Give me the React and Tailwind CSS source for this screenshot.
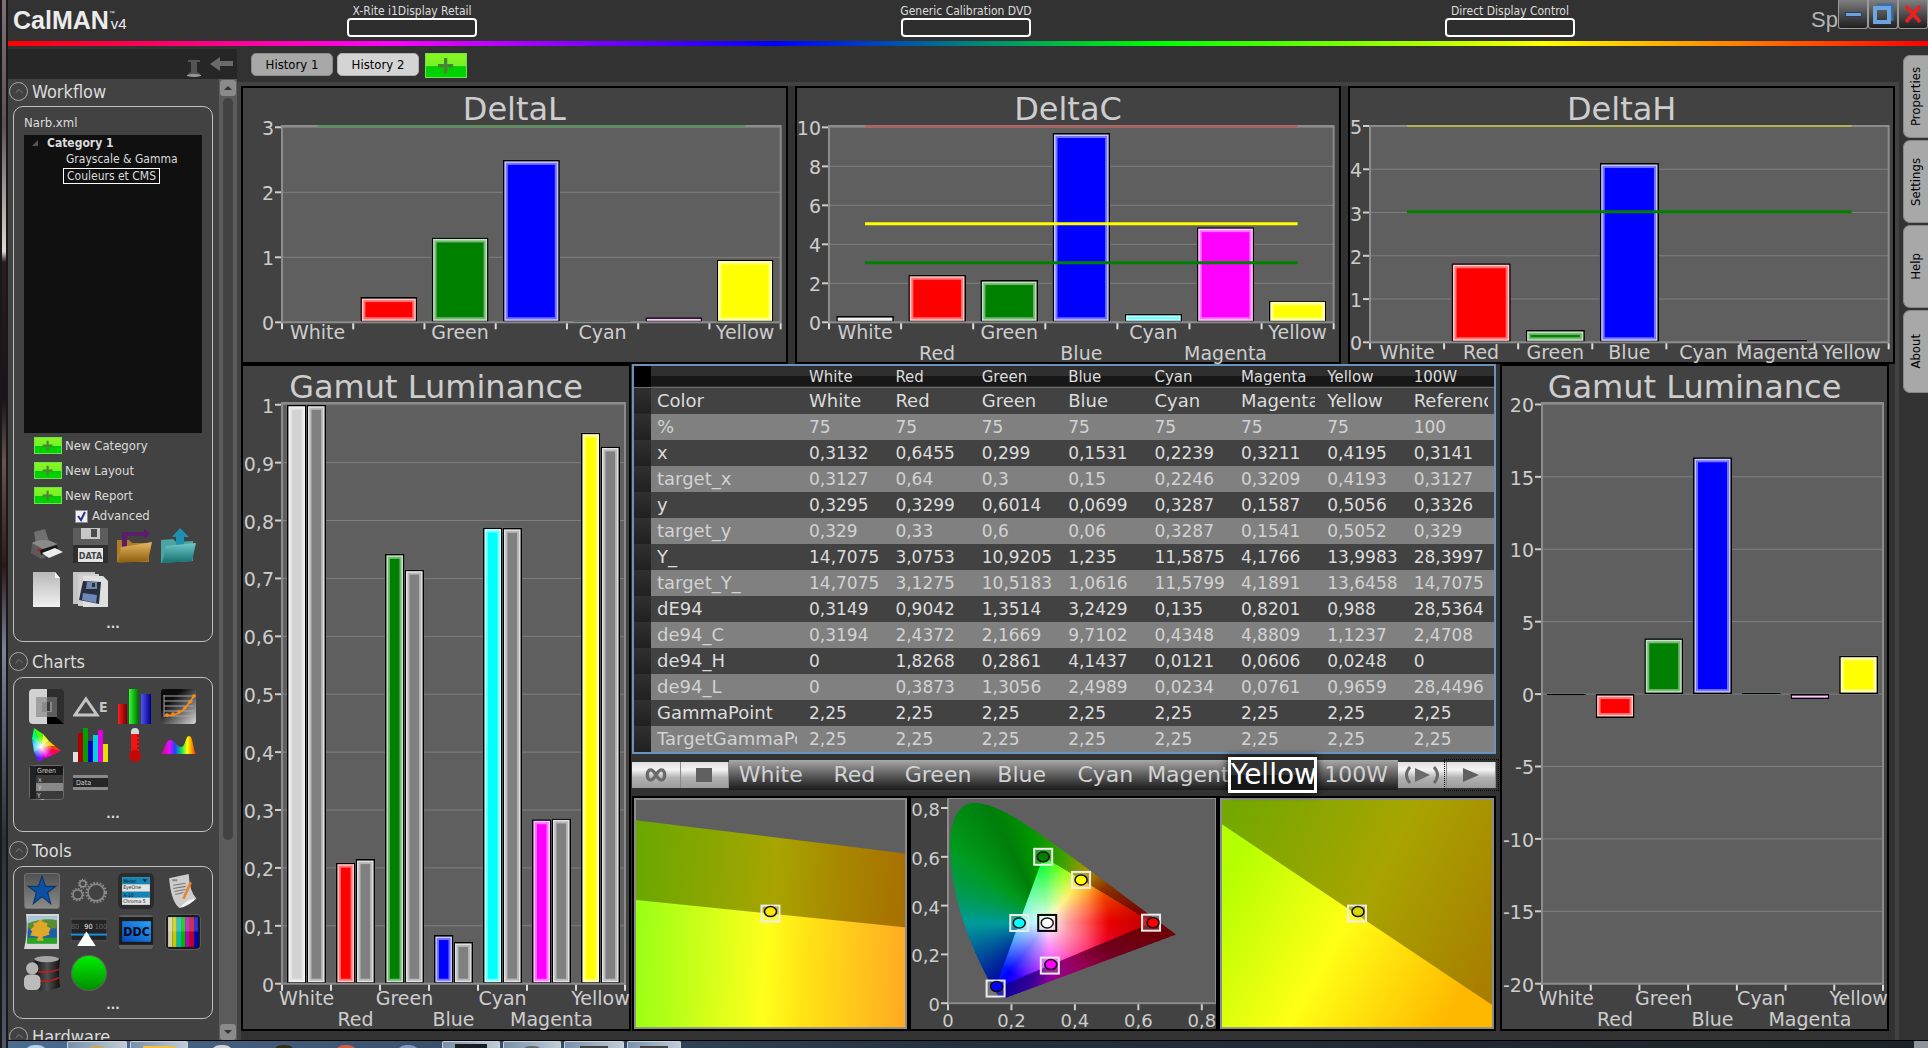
import { ChevronUp } from "lucide-react";

const COLORS = ["White", "Red", "Green", "Blue", "Cyan", "Magenta", "Yellow"];
const FILLS = ["#d3d3d3", "#ff0000", "#008000", "#0000ff", "#00ffff", "#ff00ff", "#ffff00"];

const COLUMNS = [...COLORS, "100W"];

const ROWS = [
  ["Color", "White", "Red", "Green", "Blue", "Cyan", "Magenta", "Yellow", "Reference"],
  ["%", "75", "75", "75", "75", "75", "75", "75", "100"],
  ["x", "0,3132", "0,6455", "0,299", "0,1531", "0,2239", "0,3211", "0,4195", "0,3141"],
  ["target_x", "0,3127", "0,64", "0,3", "0,15", "0,2246", "0,3209", "0,4193", "0,3127"],
  ["y", "0,3295", "0,3299", "0,6014", "0,0699", "0,3287", "0,1587", "0,5056", "0,3326"],
  ["target_y", "0,329", "0,33", "0,6", "0,06", "0,3287", "0,1541", "0,5052", "0,329"],
  ["Y_", "14,7075", "3,0753", "10,9205", "1,235", "11,5875", "4,1766", "13,9983", "28,3997"],
  ["target_Y_", "14,7075", "3,1275", "10,5183", "1,0616", "11,5799", "4,1891", "13,6458", "14,7075"],
  ["dE94", "0,3149", "0,9042", "1,3514", "3,2429", "0,135", "0,8201", "0,988", "28,5364"],
  ["de94_C", "0,3194", "2,4372", "2,1669", "9,7102", "0,4348", "4,8809", "1,1237", "2,4708"],
  ["de94_H", "0", "1,8268", "0,2861", "4,1437", "0,0121", "0,0606", "0,0248", "0"],
  ["de94_L", "0", "0,3873", "1,3056", "2,4989", "0,0234", "0,0761", "0,9659", "28,4496"],
  ["GammaPoint", "2,25", "2,25", "2,25", "2,25", "2,25", "2,25", "2,25", "2,25"],
  ["TargetGammaPoint", "2,25", "2,25", "2,25", "2,25", "2,25", "2,25", "2,25", "2,25"],
];

const pct = (n) => `${n}%`;

/* ---------- bar charts ---------- */

function Bar({ x, y, width, height, fill }) {
  return (
    <svg x={pct(x)} y={pct(y)} width={pct(width)} height={pct(height)}>
      <rect width="100%" height="100%" fill={fill} />
      <rect width="100%" height="100%" fill="none" stroke="#fff" strokeOpacity="0.45" strokeWidth="10" />
      <rect width="100%" height="100%" fill="none" stroke="#fff" strokeOpacity="0.6" strokeWidth="6" />
      <rect width="100%" height="100%" fill="none" stroke="#000" strokeWidth="3" />
    </svg>
  );
}

// labels: "single" = one row, "stagger" = odd ones on a second row, "even" = odd ones hidden
function BarChart({ title, series, min, max, ticks, lines = [], labels, labelRows = [17, 38], titleClass, bodyClass }) {
  const range = max - min;
  const toY = (v) => ((max - v) / range) * 100;
  const slot = 100 / COLORS.length;
  const barWidth = (slot * 0.8) / series.length;

  return (
    <section className="flex min-h-0 min-w-0 flex-1 flex-col border-2 border-black bg-[#424242] font-['DejaVu_Sans',sans-serif] text-[#cdcdcd]">
      <h2 className={`shrink-0 text-center text-[32px] ${titleClass}`}>{title}</h2>
      <div className={`min-h-0 flex-1 ${bodyClass}`}>
        <svg className="block h-full w-full overflow-visible text-[19px]" role="img">
          <rect width="100%" height="100%" fill="#5f5f5f" />
          {ticks.map((t) => (
            <g key={t}>
              <line x1="0" x2="100%" y1={pct(toY(t))} y2={pct(toY(t))} stroke="#808080" strokeWidth="1" />
              <line x1="-7" x2="0" y1={pct(toY(t))} y2={pct(toY(t))} stroke="#cdcdcd" strokeWidth="2" />
              <text x="-8" y={pct(toY(t))} dy="8" textAnchor="end" fill="currentColor">
                {String(t).replace(".", ",")}
              </text>
            </g>
          ))}
          {series.map((s, si) =>
            s.values.map((v, i) => {
              const top = toY(Math.min(Math.max(v, 0), max));
              const bottom = toY(Math.min(v, 0));
              if (top === bottom) return null;
              return (
                <Bar
                  key={`${si}-${i}`}
                  x={i * slot + slot * 0.1 + si * barWidth}
                  y={top}
                  width={barWidth}
                  height={bottom - top}
                  fill={s.fill || FILLS[i]}
                />
              );
            })
          )}
          <rect width="100%" height="100%" fill="none" stroke="#8c8c8c" strokeWidth="2" />
          {lines.map((l) => (
            <line
              key={l.value}
              x1={pct(slot / 2)}
              x2={pct(100 - slot / 2)}
              y1={pct(toY(l.value))}
              y2={pct(toY(l.value))}
              stroke={l.color}
              strokeWidth={l.width}
            />
          ))}
          <svg y="100%" className="overflow-visible">
            {[...COLORS, ""].map((c, i) => (
              <line key={i} x1={pct(i * slot)} x2={pct(i * slot)} y1="1" y2="7" stroke="#dcdcdc" strokeWidth="2" />
            ))}
            {COLORS.map((c, i) => {
              const odd = i % 2 === 1;
              if (odd && labels === "even") return null;
              return (
                <text
                  key={c}
                  x={pct(i * slot + slot / 2)}
                  y={odd && labels === "stagger" ? labelRows[1] : labelRows[0]}
                  textAnchor="middle"
                  fill="currentColor"
                >
                  {c}
                </text>
              );
            })}
          </svg>
        </svg>
      </div>
    </section>
  );
}

/* ---------- chromaticity plots ---------- */

const LOCUS =
  "M227 137 L59 200 Q54 203 49 197 C32 170 3 110 2 50 C2 20 12 5 26 5 C50 5 80 28 119 56 Z";

const DARK_STOPS = [
  [0, [110, 0, 0]],
  [30, [140, 50, 0]],
  [52, [170, 150, 0]],
  [75, [60, 160, 0]],
  [100, [0, 150, 0]],
  [115, [0, 125, 10]],
  [140, [0, 155, 30]],
  [160, [0, 155, 80]],
  [180, [0, 155, 155]],
  [205, [0, 80, 155]],
  [232, [0, 0, 160]],
  [255, [60, 0, 150]],
  [273, [150, 0, 150]],
  [310, [150, 0, 80]],
  [335, [110, 0, 30]],
  [360, [110, 0, 0]],
];

const BRIGHT_STOPS = [
  [0, [255, 0, 0]],
  [25, [255, 90, 0]],
  [52, [255, 230, 0]],
  [70, [140, 255, 0]],
  [93, [0, 255, 40]],
  [180, [0, 240, 255]],
  [232, [0, 0, 255]],
  [255, [130, 0, 255]],
  [273, [255, 0, 255]],
  [310, [255, 0, 110]],
  [360, [255, 0, 0]],
];

function colorAt(stops, angle) {
  const i = Math.max(1, stops.findIndex(([a]) => a >= angle));
  const [a0, c0] = stops[i - 1];
  const [a1, c1] = stops[i];
  const k = (angle - a0) / (a1 - a0);
  return `rgb(${c0.map((c, n) => Math.round(c + (c1[n] - c) * k)).join(",")})`;
}

// Colour wheel around the white point, made of 2 degree wedges
function Wheel({ stops, clip }) {
  const cx = 99;
  const cy = 125;
  const wedges = [];
  for (let a = 0; a < 360; a += 2) {
    const r0 = (a * Math.PI) / 180;
    const r1 = ((a + 3) * Math.PI) / 180;
    wedges.push(
      <polygon
        key={a}
        points={`${cx},${cy} ${cx + 260 * Math.cos(r0)},${cy - 260 * Math.sin(r0)} ${cx + 260 * Math.cos(r1)},${cy - 260 * Math.sin(r1)}`}
        fill={colorAt(stops, a)}
      />
    );
  }
  return <g clipPath={`url(#${clip})`}>{wedges}</g>;
}

function Marker({ x, y, fill, box = "#ececec", dot = [0, 0] }) {
  return (
    <svg x={pct(x)} y={pct(y)} className="overflow-visible">
      <rect x="-9" y="-8" width="18" height="16" fill="#fff" fillOpacity="0.15" stroke={box} strokeWidth="2" />
      <ellipse cx={dot[0]} cy={dot[1]} rx="6" ry="5" fill={fill} stroke="#111" strokeWidth="1.5" />
    </svg>
  );
}

const POINTS = [
  { t: [0.3, 0.6], fill: "#008000" },
  { t: [0.4193, 0.5052], fill: "#ffff00" },
  { t: [0.64, 0.33], fill: "#ff0000", dot: [2, 0] },
  { t: [0.2246, 0.3287], fill: "#00ffff" },
  { t: [0.3127, 0.329], fill: "#ffffff", box: "#000000" },
  { t: [0.3209, 0.1541], fill: "#ff00ff", dot: [1, -1] },
  { t: [0.15, 0.06], fill: "#0000ff", dot: [1, -2] },
];

function CieChart() {
  const xMax = 0.8447;
  const yMax = 0.841;
  const toX = (v) => (v / xMax) * 100;
  const toY = (v) => 100 - (v / yMax) * 100;
  const steps = [0, 0.2, 0.4, 0.6, 0.8];

  return (
    <section className="min-w-0 flex-[268] overflow-hidden border-2 border-black bg-[#424242] pb-[26px] pl-[37px] font-['DejaVu_Sans',sans-serif]">
      <svg className="block h-full w-full overflow-visible text-[18px] text-[#cdcdcd]" role="img">
        <rect width="100%" height="100%" fill="#5f5f5f" />
        <svg width="100%" height="100%" viewBox="0 0 267 206" preserveAspectRatio="none">
          <defs>
            <clipPath id="locus">
              <path d={LOCUS} />
            </clipPath>
            <clipPath id="gamut">
              <polygon points="203,125 95,59 47,191" />
            </clipPath>
            <radialGradient id="whitePoint" gradientUnits="userSpaceOnUse" cx="99" cy="125" r="62">
              <stop offset="0" stopColor="#fff" />
              <stop offset="0.35" stopColor="#fff" stopOpacity="0.6" />
              <stop offset="1" stopColor="#fff" stopOpacity="0" />
            </radialGradient>
            <linearGradient id="redEdge" gradientUnits="userSpaceOnUse" x1="140" y1="0" x2="203" y2="0">
              <stop offset="0" stopColor="#a00000" stopOpacity="0" />
              <stop offset="1" stopColor="#a00000" stopOpacity="0.7" />
            </linearGradient>
          </defs>
          <Wheel stops={DARK_STOPS} clip="locus" />
          <Wheel stops={BRIGHT_STOPS} clip="gamut" />
          <polygon points="203,125 95,59 47,191" fill="url(#whitePoint)" />
          <polygon points="203,125 95,59 47,191" fill="url(#redEdge)" />
        </svg>
        <rect width="100%" height="100%" fill="none" stroke="#8c8c8c" strokeWidth="2" />
        {steps.map((s) => (
          <g key={s}>
            <line x1="-7" x2="0" y1={pct(toY(s))} y2={pct(toY(s))} stroke="#cdcdcd" strokeWidth="2" />
            <text x="-8" y={pct(toY(s))} dy="8" textAnchor="end" fill="currentColor">
              {String(s).replace(".", ",")}
            </text>
          </g>
        ))}
        <svg y="100%" className="overflow-visible">
          {steps.map((s) => (
            <g key={s}>
              <line x1={pct(toX(s))} x2={pct(toX(s))} y1="1" y2="7" stroke="#cdcdcd" strokeWidth="2" />
              <text x={pct(toX(s))} y="24" textAnchor="middle" fill="currentColor">
                {String(s).replace(".", ",")}
              </text>
            </g>
          ))}
        </svg>
        {POINTS.map((p) => (
          <Marker key={p.fill} x={toX(p.t[0])} y={toY(p.t[1])} fill={p.fill} box={p.box} dot={p.dot} />
        ))}
      </svg>
    </section>
  );
}

function ZoomTop() {
  return (
    <section className="min-w-0 flex-[273] border-2 border-black">
      <svg className="block h-full w-full" role="img">
        <rect width="100%" height="100%" fill="#5f5f5f" />
        <svg width="100%" height="100%" viewBox="0 0 270 232" preserveAspectRatio="none">
          <defs>
            <linearGradient id="ztDark" gradientUnits="userSpaceOnUse" x1="0" y1="60" x2="270" y2="80">
              <stop offset="0" stopColor="#68a800" />
              <stop offset="0.52" stopColor="#a8a400" />
              <stop offset="0.75" stopColor="#a88800" />
              <stop offset="1" stopColor="#a87000" />
            </linearGradient>
            <linearGradient id="ztBright" gradientUnits="userSpaceOnUse" x1="0" y1="160" x2="270" y2="172">
              <stop offset="0" stopColor="#98ff14" />
              <stop offset="0.48" stopColor="#ffff1c" />
              <stop offset="0.62" stopColor="#ffe414" />
              <stop offset="1" stopColor="#ffaa22" />
            </linearGradient>
          </defs>
          <polygon points="0,22 270,56 270,132 0,104" fill="url(#ztDark)" />
          <polygon points="0,102 270,130 270,232 0,232" fill="url(#ztBright)" />
        </svg>
        <rect width="100%" height="100%" fill="none" stroke="#8c8c8c" strokeWidth="4" />
        <Marker x={50} y={50} fill="#ffe800" dot={[0, -2]} />
      </svg>
    </section>
  );
}

function ZoomSide() {
  return (
    <section className="min-w-0 flex-[274] border-2 border-black">
      <svg className="block h-full w-full" role="img">
        <svg width="100%" height="100%" viewBox="0 0 272 232" preserveAspectRatio="none">
          <defs>
            <linearGradient id="zsDark" gradientUnits="userSpaceOnUse" x1="20" y1="0" x2="290" y2="140">
              <stop offset="0" stopColor="#74a800" />
              <stop offset="0.52" stopColor="#a8a400" />
              <stop offset="1" stopColor="#a87e00" />
            </linearGradient>
            <linearGradient id="zsBright" gradientUnits="userSpaceOnUse" x1="0" y1="90" x2="230" y2="215">
              <stop offset="0" stopColor="#b4ff00" />
              <stop offset="0.48" stopColor="#ffff14" />
              <stop offset="1" stopColor="#ffb800" />
            </linearGradient>
          </defs>
          <rect width="272" height="232" fill="url(#zsDark)" />
          <polygon points="0,25 272,209 272,232 0,232" fill="url(#zsBright)" />
        </svg>
        <rect width="100%" height="100%" fill="none" stroke="#8c8c8c" strokeWidth="4" />
        <Marker x={50} y={50} fill="#d8d800" dot={[1, -2]} />
      </svg>
    </section>
  );
}

/* ---------- data table and pattern bar ---------- */

function DataTable() {
  return (
    <div className="shrink-0 overflow-hidden border-2 border-[#6a93bb] bg-[#424242] font-['DejaVu_Sans',sans-serif]">
      <table className="w-full table-fixed border-collapse text-left text-[#dcdcdc]">
        <colgroup>
          <col className="w-[17px]" />
          <col className="w-[152px]" />
        </colgroup>
        <thead>
          <tr className="h-[21px] border-b border-[#6c6c6c] bg-[linear-gradient(#2f2f2f_50%,#171717_50%)]">
            <td className="bg-black p-0"></td>
            <td className="p-0"></td>
            {COLUMNS.map((c) => (
              <th key={c} scope="col" className="p-0 pl-[6px] text-[15px] leading-5 font-normal">
                {c}
              </th>
            ))}
          </tr>
        </thead>
        <tbody className="text-[17px] leading-[26px]">
          {ROWS.map(([name, ...values], i) => (
            <tr key={name} className={`h-[26px] ${i % 2 ? "bg-[#808080] text-[#d2d2d2]" : "bg-[#424242]"}`}>
              <td className="bg-linear-to-b from-[#303030] to-[#202020] p-0"></td>
              <th scope="row" className="p-0 pr-[6px] pl-[6px] text-[18px] font-normal">
                <div className="overflow-hidden whitespace-nowrap">{name}</div>
              </th>
              {values.map((v, n) => (
                <td key={n} className={`p-0 pr-[6px] pl-[6px] ${i === 0 ? "text-[18px]" : ""}`}>
                  <div className="overflow-hidden whitespace-nowrap">{v}</div>
                </td>
              ))}
            </tr>
          ))}
        </tbody>
      </table>
    </div>
  );
}

const SILVER =
  "flex h-[26px] flex-1 items-center justify-center border-r border-[#8a8a8a] bg-[linear-gradient(#dedede,#f4f4f4_30%,#b2b2b2_60%,#9c9c9c)]";

function PatternBar() {
  return (
    <div className="flex h-[42px] shrink-0 items-center font-['DejaVu_Sans',sans-serif]">
      <div className="flex flex-[97]">
        <button className={SILVER} aria-label="Loop">
          <svg width="22" height="14" viewBox="0 0 26 16" fill="none" stroke="#6a6a6a" strokeWidth="4">
            <path d="M13 8 C10 3 8 2 6.500 2 C1.500 2 1.500 14 6.500 14 C8 14 10 13 13 8 C16 3 18 2 19.500 2 C24.500 2 24.500 14 19.500 14 C18 14 16 13 13 8Z" />
          </svg>
        </button>
        <button className={SILVER} aria-label="Stop">
          <span className="h-[14px] w-4 bg-[#606060]"></span>
        </button>
      </div>
      <div className="flex h-[30px] flex-[669] items-center bg-linear-to-b from-[#a8a8a8] to-[#1c1c1c] text-[#d2d2d2]">
        {COLUMNS.map((c) =>
          c === "Yellow" ? (
            <button
              key={c}
              className="z-10 -mx-[3px] h-9 min-w-0 flex-1 basis-[6px] overflow-hidden border-[3px] border-white bg-[linear-gradient(#323232_50%,#161616_50%)] text-left text-[28px] leading-[30px] whitespace-nowrap text-white shadow-[0_0_8px_#000]"
            >
              {c}
            </button>
          ) : (
            <button
              key={c}
              className={`h-full min-w-0 flex-1 overflow-hidden text-[22px] leading-[30px] whitespace-nowrap ${c === "Magenta" ? "text-left" : "text-center"}`}
            >
              {c}
            </button>
          )
        )}
      </div>
      <div className="flex flex-[98] items-center">
        <button className={SILVER} aria-label="Step">
          <svg width="36" height="20" viewBox="0 0 36 20" fill="none" stroke="#6a6a6a" strokeWidth="3">
            <path d="M6 2 Q-1 10 6 18 M30 2 Q37 10 30 18" />
            <path d="M11 3 L26 10 L11 17Z" fill="#6a6a6a" stroke="none" />
          </svg>
        </button>
        <button className={`${SILVER} outline-1 outline-offset-2 outline-black outline-dotted`} aria-label="Play">
          <svg width="18" height="14" viewBox="0 0 18 14">
            <path d="M1 0 L17 7 L1 14Z" fill="#606060" />
          </svg>
        </button>
      </div>
    </div>
  );
}

/* ---------- sidebar icons ---------- */

function Icon({ children, size = "size-[35px]", label }) {
  return (
    <button aria-label={label} className={size}>
      <svg viewBox="0 0 35 35" className="block size-full">
        {children}
      </svg>
    </button>
  );
}

function PrinterIcon() {
  return (
    <Icon label="Print">
      <path d="M5 4 L16 1 L20 13 L7 16Z" fill="#707070" />
      <path d="M3 15 Q14 8 28 16 L30 24 L12 31 L2 25Z" fill="#5c5c5c" />
      <path d="M3 15 Q14 8 28 16 L14 21Z" fill="#8a8a8a" />
      <path d="M11 22 L28 17 L29 21 L12 27Z" fill="#161616" />
      <path d="M13 25 L26 20 L34 24 L20 30Z" fill="#ececec" />
      <circle cx="10" cy="22" r="1.500" fill="#d01010" />
    </Icon>
  );
}

function DataDiskIcon() {
  return (
    <Icon label="Save data">
      <rect x="0" y="0" width="35" height="35" fill="#2e2e2e" />
      <rect x="0" y="0" width="35" height="17" fill="#5c5c5c" />
      <path d="M8 0 H27 V11 H8Z" fill="#c6c6c6" />
      <rect x="18" y="1" width="6" height="8" fill="#4a4a4a" />
      <rect x="5" y="20" width="25" height="14" fill="#e4e4e4" />
      <text x="17.500" y="31" textAnchor="middle" fontSize="9" fontWeight="bold" fill="#444">DATA</text>
    </Icon>
  );
}

function FolderOutIcon() {
  return (
    <Icon label="Open">
      <defs>
        <linearGradient id="gold" x1="0" y1="0" x2="0" y2="1">
          <stop offset="0" stopColor="#e8b860" />
          <stop offset="1" stopColor="#8a5c0c" />
        </linearGradient>
      </defs>
      <path d="M0 12 H12 L15 15 H32 V34 H0Z" fill="#b07c28" />
      <path d="M5 21 V4 H27 V0 L33 6 L27 11 V8 H10 V19Z" fill="#5c1c6c" />
      <path d="M4 19 L18 17 L35 14 L31 33 L1 35Z" fill="url(#gold)" />
    </Icon>
  );
}

function FolderUpIcon() {
  return (
    <Icon label="Import">
      <defs>
        <linearGradient id="teal" x1="0" y1="0" x2="0" y2="1">
          <stop offset="0" stopColor="#70c8c8" />
          <stop offset="1" stopColor="#147070" />
        </linearGradient>
      </defs>
      <path d="M0 12 L12 11 L15 14 L32 13 V33 L0 35Z" fill="#4ca4a4" />
      <path d="M19 0 L28 9 H23 V18 H15 V9 H11Z" fill="#2090b0" />
      <path d="M5 18 L35 15 L31 33 L1 35Z" fill="url(#teal)" />
    </Icon>
  );
}

function PageIcon() {
  return (
    <Icon label="New page">
      <defs>
        <linearGradient id="paper" x1="0" y1="0" x2="0" y2="1">
          <stop offset="0" stopColor="#b8b8b8" />
          <stop offset="1" stopColor="#f0f0f0" />
        </linearGradient>
      </defs>
      <path d="M4 0 H26 L31 6 V35 H4Z" fill="url(#paper)" />
      <path d="M26 0 V6 H31Z" fill="#f6f6f6" />
    </Icon>
  );
}

function PagesDiskIcon() {
  return (
    <Icon label="Save all">
      <path d="M0 0 H22 V32 H0Z" fill="#c4c4c4" />
      <path d="M5 2 H26 V34 H5Z" fill="#d0d0d0" />
      <path d="M10 4 H30 L35 9 V35 H10Z" fill="#e0e0e0" />
      <path d="M10 9 L28 10 L26 32 L6 28Z" fill="#26303e" />
      <path d="M14 10 H24 V17 H13Z" fill="#7486a8" />
      <rect x="19" y="11" width="3" height="4" fill="#26303e" />
      <path d="M10 21 L24 23 L23 31 L9 28Z" fill="#6c88b8" />
    </Icon>
  );
}

function ContrastIcon() {
  return (
    <Icon label="Contrast">
      <rect width="35" height="35" rx="4" fill="#2e2e2e" />
      <path d="M4 0 H18 V35 H4 Q0 35 0 31 V4 Q0 0 4 0Z" fill="#d2d2d2" />
      <path d="M18 20 L35 35 H18Z" fill="#000" />
      <rect x="7" y="8" width="11" height="20" fill="#a0a0a0" />
      <rect x="18" y="8" width="10" height="20" fill="#5c5c5c" />
      <rect x="13" y="13" width="10" height="10" fill="#8a8a8a" />
      <rect x="18" y="13" width="3" height="9" fill="#3a3a3a" />
    </Icon>
  );
}

function DeltaEIcon() {
  return (
    <Icon label="Delta E">
      <path d="M13 10 L24 26 H2Z" fill="none" stroke="#c4c4c4" strokeWidth="3" />
      <text x="26" y="23" fontSize="14" fontWeight="bold" fill="#c4c4c4">E</text>
    </Icon>
  );
}

function RgbBarsIcon() {
  return (
    <Icon label="RGB balance">
      <defs>
        <linearGradient id="rb"><stop offset="0" stopColor="#ff2020" /><stop offset="1" stopColor="#700000" /></linearGradient>
        <linearGradient id="gb"><stop offset="0" stopColor="#30ff30" /><stop offset="1" stopColor="#006800" /></linearGradient>
        <linearGradient id="bb"><stop offset="0" stopColor="#5050ff" /><stop offset="1" stopColor="#000080" /></linearGradient>
      </defs>
      <rect x="1" y="15" width="9" height="20" fill="url(#rb)" />
      <rect x="12" y="0" width="10" height="35" fill="url(#gb)" />
      <rect x="24" y="5" width="10" height="30" fill="url(#bb)" />
    </Icon>
  );
}

function GammaIcon() {
  return (
    <Icon label="Gamma">
      <defs>
        <linearGradient id="gm" x1="0" y1="0" x2="1" y2="1">
          <stop offset="0.3" stopColor="#0c0c0c" />
          <stop offset="1" stopColor="#d8d8d8" />
        </linearGradient>
      </defs>
      <rect width="35" height="35" rx="3" fill="url(#gm)" />
      <path d="M3 7 H32 M3 12 H32 M3 17 H32 M3 22 H32 M3 27 H32 M3 6 V28" stroke="#a8a8a8" />
      <path d="M4 26 Q16 28 24 19 Q29 13 33 7" fill="none" stroke="#ff8c10" strokeWidth="1.500" />
      {[[6, 26], [12, 25], [18, 23], [24, 19], [29, 13], [33, 7]].map(([x, y]) => (
        <circle key={x} cx={x} cy={y} r="1.800" fill="#ff8c10" />
      ))}
    </Icon>
  );
}

function GamutIcon() {
  const hues = ["#00ff80", "#40ff00", "#e0ff00", "#ffc000", "#ff4000", "#ff0060", "#ff00d0", "#a000ff", "#3030ff", "#00c0ff"];
  const edge = [[3, 12], [5, 1], [14, 7], [20, 14], [26, 19], [32, 24], [24, 28], [16, 31], [9, 35], [5, 25], [3, 12]];
  return (
    <Icon label="Gamut">
      <defs>
        <radialGradient id="gi" gradientUnits="userSpaceOnUse" cx="12" cy="20" r="11">
          <stop offset="0" stopColor="#fff" />
          <stop offset="1" stopColor="#fff" stopOpacity="0" />
        </radialGradient>
      </defs>
      {hues.map((h, i) => (
        <polygon key={h} fill={h} points={`12,20 ${edge[i].join()} ${edge[i + 1].join()}`} />
      ))}
      <polygon points={edge.map((e) => e.join()).join(" ")} fill="url(#gi)" />
    </Icon>
  );
}

function ColorBarsIcon() {
  const bars = [["#e0e0e0", 25], ["#b00000", 6], ["#00a000", 1], ["#0000c8", 14], ["#00d0e0", 8], ["#e000e0", 3], ["#e8e000", 17]];
  return (
    <Icon label="Luminance">
      {bars.map(([c, y], i) => (
        <rect key={c} x={i * 5} y={y} width="5" height={35 - y} fill={c} />
      ))}
    </Icon>
  );
}

function ThermometerIcon() {
  return (
    <Icon label="Temperature">
      <rect x="14" y="1" width="8" height="27" rx="4" fill="#d8d8d8" />
      <rect x="14" y="7" width="8" height="22" fill="#f01414" />
      <circle cx="18" cy="29" r="6" fill="#c40808" />
      <path d="M20 9 H22 M20 13 H22 M20 17 H22 M20 21 H22" stroke="#700" />
    </Icon>
  );
}

function SpectrumIcon() {
  return (
    <Icon label="Spectrum">
      <defs>
        <linearGradient id="sp">
          <stop offset="0.05" stopColor="#e000a0" />
          <stop offset="0.25" stopColor="#e010ff" />
          <stop offset="0.4" stopColor="#2040ff" />
          <stop offset="0.58" stopColor="#00e060" />
          <stop offset="0.75" stopColor="#ffff00" />
          <stop offset="0.9" stopColor="#ff8000" />
          <stop offset="1" stopColor="#ff2000" />
        </linearGradient>
      </defs>
      <path d="M0 27 C4 24 4 13 9 13 C14 13 16 20 20 20 C25 20 24 9 28 9 C32 9 32 22 35 27Z" fill="url(#sp)" />
    </Icon>
  );
}

function GridIcon() {
  return (
    <Icon label="Data grid">
      <rect x="0.500" y="0.500" width="34" height="34" rx="3" fill="#3a3a3a" stroke="#6a6a6a" />
      <rect x="1" y="1" width="33" height="9" fill="#181818" />
      <rect x="1" y="1" width="6" height="33" fill="#222" />
      <rect x="7" y="18" width="27" height="8" fill="#888" />
      <g fontSize="7" fill="#ccc">
        <text x="8" y="8">Green</text>
        <text x="9" y="17">x</text>
        <text x="9" y="24">y</text>
        <text x="8" y="33">Y_</text>
      </g>
    </Icon>
  );
}

function DataRowIcon() {
  return (
    <Icon label="Data row">
      <rect x="0" y="10" width="35" height="15" rx="1" fill="#8a8a8a" />
      <rect x="0" y="13" width="35" height="9" fill="#262626" />
      <text x="3" y="20" fontSize="7" fill="#ccc">Data</text>
    </Icon>
  );
}

function StarIcon() {
  return (
    <Icon label="Favorites" size="size-9">
      <defs>
        <linearGradient id="st" x1="0" y1="0" x2="0" y2="1">
          <stop offset="0" stopColor="#505050" />
          <stop offset="1" stopColor="#8c8c8c" />
        </linearGradient>
      </defs>
      <rect x="0.500" y="0.500" width="34" height="34" rx="3" fill="url(#st)" stroke="#707070" />
      <path d="M17.500 3 L21 13 H31 L23 19 L26 30 L17.500 23 L9 30 L12 19 L4 13 H14Z" fill="#0c50a4" stroke="#083468" />
    </Icon>
  );
}

function GearsIcon() {
  return (
    <Icon label="Options" size="size-9">
      <g fill="none" stroke="#8c8c8c">
        <circle cx="24.500" cy="19" r="8" strokeWidth="1.500" />
        <circle cx="24.500" cy="19" r="9.500" strokeWidth="2" strokeDasharray="1.600 1.600" />
        <circle cx="6.500" cy="21" r="4.500" strokeWidth="1.500" />
        <circle cx="6.500" cy="21" r="5.800" strokeWidth="1.500" strokeDasharray="1.500 1.500" />
        <circle cx="11.500" cy="10.500" r="3" strokeWidth="1.500" />
        <circle cx="11.500" cy="10.500" r="4.200" strokeWidth="1.200" strokeDasharray="1.300 1.300" />
      </g>
    </Icon>
  );
}

function MeterIcon() {
  return (
    <Icon label="Meter" size="size-9">
      <rect width="35" height="35" rx="5" fill="#2c2c2c" />
      <rect x="4" y="4" width="27" height="27" fill="#e4e4e4" />
      <rect x="4" y="4" width="27" height="7" fill="#1484b4" />
      <rect x="4" y="18" width="27" height="6" fill="#1484b4" />
      <g fontSize="5" fill="#101820">
        <text x="5" y="10">Meter</text>
        <path d="M24 6 H28 L26 9Z" />
        <text x="5" y="16">EyeOne</text>
        <text x="5" y="23">X-10</text>
        <text x="5" y="29">Chroma 5</text>
      </g>
    </Icon>
  );
}

function NotesIcon() {
  return (
    <Icon label="Notes" size="size-9">
      <path d="M4 5 L23 1 Q24 18 30 24 L14 34 Q6 28 4 5Z" fill="#cdcdcd" />
      <path d="M14 34 Q20 26 31 24 Q24 32 14 34Z" fill="#f2f2f2" />
      <path d="M8 12 L20 10 M8 15 L20 13 M9 18 L20 16 M10 21 L18 19" stroke="#777" />
      <rect x="7" y="6" width="5" height="2" fill="#888" />
      <path d="M25 9 L18 25" stroke="#e88428" strokeWidth="2.500" />
    </Icon>
  );
}

function PhotoIcon() {
  return (
    <Icon label="Pictures" size="size-9">
      <path d="M2 0 H34 V34 H0 Q4 18 2 0Z" fill="#d8d8d8" />
      <path d="M4 2 H32 V28 H3Z" fill="#1c5ca8" />
      <path d="M4 2 H32 V10 H4Z" fill="#a8c8d8" />
      <path d="M4 9 Q20 3 32 6 V14 H4Z" fill="#5c8c30" />
      <path d="M3 23 H32 V29 H3Z" fill="#28a428" />
      <path d="M16 5 L19 8 L23 9 L22 12 L26 14 L24 18 L25 20 L18 22 L19 26 H12 L14 22 L6 21 L8 17 L6 15 L10 12 L9 9 L13 8Z" fill="#e0a828" />
    </Icon>
  );
}

function SliderIcon() {
  return (
    <Icon label="Level" size="size-9">
      <rect x="0" y="5" width="35" height="21" fill="#242424" stroke="#555" />
      <rect x="0" y="19" width="35" height="2" fill="#1c8cd8" />
      <g fontSize="7">
        <text x="0" y="15" fill="#666">80</text>
        <text x="13" y="15" fill="#eee">90</text>
        <text x="23" y="15" fill="#666">100</text>
      </g>
      <path d="M15 17 L24 31 H6Z" fill="#fff" />
    </Icon>
  );
}

function DdcIcon() {
  return (
    <Icon label="DDC" size="size-9">
      <defs>
        <linearGradient id="dd" x1="0" y1="1" x2="1" y2="0">
          <stop offset="0" stopColor="#0848b8" />
          <stop offset="1" stopColor="#28a4f8" />
        </linearGradient>
      </defs>
      <rect x="1" y="1" width="33" height="33" rx="3" fill="#606060" />
      <rect x="1" y="3" width="33" height="27" fill="#1c1c1c" />
      <rect x="4" y="7" width="28" height="20" fill="url(#dd)" />
      <text x="18" y="21" textAnchor="middle" fontSize="12" fontWeight="bold" fill="#0a0a20">DDC</text>
    </Icon>
  );
}

function TestPatternIcon() {
  const bars = ["#d0d0a8", "#c8c800", "#00b8b8", "#00b800", "#b800b8", "#c00020", "#0000b8"];
  return (
    <Icon label="Test pattern" size="size-9">
      <rect x="0.500" y="0.500" width="34" height="34" rx="4" fill="#1a1a1a" stroke="#5a5a5a" />
      {bars.map((c, i) => (
        <rect key={c} x={3 + i * 4.2} y="3" width="4.2" height="29" fill={c} />
      ))}
      <rect x="3" y="3" width="29" height="14" fill="#fff" fillOpacity="0.2" />
    </Icon>
  );
}

function DatabaseIcon() {
  return (
    <Icon label="Client database" size="size-9">
      <defs>
        <linearGradient id="db">
          <stop offset="0" stopColor="#101010" />
          <stop offset="0.5" stopColor="#505050" />
          <stop offset="1" stopColor="#101010" />
        </linearGradient>
      </defs>
      <path d="M10 4 H35 Q33 18 35 31 Q22 37 12 33Z" fill="url(#db)" />
      <ellipse cx="22" cy="4" rx="12" ry="3" fill="#a4a4a4" />
      <path d="M14 16 Q24 18 34 14 M14 25 Q24 27 34 22" fill="none" stroke="#c81818" strokeWidth="1.500" />
      <circle cx="8" cy="13" r="6" fill="#b4b4b4" />
      <rect x="0" y="19" width="16" height="15" rx="5" fill="#bcbcbc" />
    </Icon>
  );
}

function GreenBallIcon() {
  return (
    <Icon label="Start" size="size-9">
      <defs>
        <linearGradient id="ball" x1="0" y1="0" x2="0" y2="1">
          <stop offset="0" stopColor="#00f000" />
          <stop offset="1" stopColor="#008c00" />
        </linearGradient>
      </defs>
      <circle cx="17.500" cy="17.500" r="17" fill="url(#ball)" stroke="#606060" />
    </Icon>
  );
}

/* ---------- sidebar ---------- */

function GreenPlus({ className, label }) {
  return (
    <button
      aria-label={label}
      className={`flex items-center justify-center border border-[#70e050] bg-[linear-gradient(#86f81e,#78f028_50%,#00cc00_55%,#00d400)] ${className}`}
    >
      <svg viewBox="0 0 16 16" className="block h-3/4">
        <path d="M8 1 V15 M1 8 H15" stroke="#4c8434" strokeWidth="3" />
      </svg>
    </button>
  );
}

function SectionHeading({ children }) {
  return (
    <h3 className="flex h-6 shrink-0 items-center gap-1 pl-px text-[18px] text-[#dcdcdc]">
      <button aria-label={`Collapse ${children}`} className="flex size-[19px] items-center justify-center rounded-full border border-[#a8a8a8]">
        <ChevronUp className="size-3 text-[#808080]" />
      </button>
      {children}
    </h3>
  );
}

const BOX = "mx-[5px] mr-[6px] shrink-0 rounded-[10px] border border-[#c0c0c0]";

function More({ className = "" }) {
  return <div className={`h-5 text-center text-[13px] leading-4 font-bold ${className}`}>...</div>;
}

function Sidebar() {
  return (
    <aside className="flex w-[229px] shrink-0 flex-col pt-[3px]">
      <div className="flex h-[30px] shrink-0 items-center justify-end gap-[9px] bg-[#262626] pr-1">
        <svg width="14" height="18" viewBox="0 0 14 18" className="mt-2">
          <path d="M1 1 H13 V3 H10 V13 Q13 14 14 17 H0 Q1 14 4 13 V3 H1Z" fill="#555" />
          <path d="M0 16 Q7 14 14 16 V17 Q7 19 0 17Z" fill="#999" />
        </svg>
        <svg width="23" height="16" viewBox="0 0 23 16">
          <path d="M0 8 L10 1 V5 H23 V10 H10 V15Z" fill="#6a6a6a" />
        </svg>
      </div>
      <div className="flex min-h-0 flex-1">
        <div className="flex w-[211px] flex-col overflow-hidden bg-[#424242] text-[13px] text-[#dcdcdc]">
          <SectionHeading>Workflow</SectionHeading>
          <div className={`${BOX} mt-[3px] pt-2 pb-[5px]`}>
            <p className="pl-[10px] leading-4">Narb.xml</p>
            <ul className="mx-[10px] mt-1 h-[298px] bg-[#101010] text-[12px] leading-4">
              <li className="flex items-center gap-[9px] pl-2 font-bold">
                <svg width="6" height="6" viewBox="0 0 6 6">
                  <path d="M6 0 V6 H0Z" fill="#555" />
                </svg>
                Category 1
              </li>
              <li className="pl-[42px]">Grayscale &amp; Gamma</li>
              <li className="pt-px pl-[39px]">
                <button className="border border-white px-[3px] leading-[14px]">Couleurs et CMS</button>
              </li>
            </ul>
            {["New Category", "New Layout", "New Report"].map((t) => (
              <div key={t} className="flex h-[25px] items-center gap-[3px] pl-5">
                <GreenPlus className="h-[17px] w-7" label={t} />
                {t}
              </div>
            ))}
            <label className="flex h-4 items-center gap-1 pl-[61px]">
              <span className="relative flex size-[13px]">
                <input
                  type="checkbox"
                  defaultChecked
                  className="peer size-[13px] appearance-none border border-[#8c8c8c] bg-[#eef0f6]"
                />
                <svg viewBox="0 0 13 13" className="pointer-events-none absolute inset-0 hidden peer-checked:block">
                  <path d="M3 6 L6 10 L10 2" fill="none" stroke="#283080" strokeWidth="2" />
                </svg>
              </span>
              Advanced
            </label>
            <div className="mt-1 grid grid-cols-[repeat(4,35px)] gap-x-[9px] gap-y-[9px] pl-[15px]">
              <PrinterIcon />
              <DataDiskIcon />
              <FolderOutIcon />
              <FolderUpIcon />
              <PageIcon />
              <PagesDiskIcon />
            </div>
            <More className="mt-[9px]" />
          </div>

          <div className="h-[7px] shrink-0" />
          <SectionHeading>Charts</SectionHeading>
          <div className={`${BOX} mt-1 pt-[11px] pb-[5px]`}>
            <div className="grid grid-cols-[repeat(4,35px)] gap-x-[9px] gap-y-[3px] pl-[15px]">
              <ContrastIcon />
              <DeltaEIcon />
              <RgbBarsIcon />
              <GammaIcon />
              <GamutIcon />
              <ColorBarsIcon />
              <ThermometerIcon />
              <SpectrumIcon />
              <GridIcon />
              <DataRowIcon />
            </div>
            <More className="mt-[6px]" />
          </div>

          <div className="h-[6px] shrink-0" />
          <SectionHeading>Tools</SectionHeading>
          <div className={`${BOX} mt-1 pt-[6px] pb-px`}>
            <div className="grid grid-cols-[repeat(4,36px)] gap-x-[11px] gap-y-[5px] pl-[10px]">
              <StarIcon />
              <GearsIcon />
              <MeterIcon />
              <NotesIcon />
              <PhotoIcon />
              <SliderIcon />
              <DdcIcon />
              <TestPatternIcon />
              <DatabaseIcon />
              <GreenBallIcon />
            </div>
            <More className="mt-[6px]" />
          </div>

          <div className="h-[5px] shrink-0" />
          <SectionHeading>Hardware</SectionHeading>
        </div>
        <div className="flex w-[18px] flex-col items-center gap-[2px] bg-[#5c5c5c] pt-px">
          <button aria-label="Scroll up" className="flex h-4 w-4 items-center justify-center rounded-[3px] bg-[#8a8a8a]">
            <svg width="8" height="4"><path d="M0 4 L4 0 L8 4Z" fill="#333" /></svg>
          </button>
          <div className="w-[10px] flex-[744] rounded-[5px] bg-[#424242]" />
          <div className="flex-[180]" />
          <button aria-label="Scroll down" className="flex h-4 w-4 items-center justify-center rounded-[3px] bg-[#8a8a8a]">
            <svg width="8" height="4"><path d="M0 0 L4 4 L8 0Z" fill="#333" /></svg>
          </button>
        </div>
      </div>
    </aside>
  );
}

/* ---------- window chrome ---------- */

function TopBar() {
  return (
    <header className="flex h-[41px] shrink-0 bg-[#323232]">
      <div className="flex w-[128px] items-start pt-[5px] pl-[5px] font-['Liberation_Sans',sans-serif] text-[#ececec]">
        <span className="text-[25px] leading-[30px] font-bold">CalMAN</span>
        <sup className="pt-2 text-[6px] leading-[6px]">™</sup>
        <span className="-ml-1 pt-[10px] text-[15px] leading-[18px]">v4</span>
      </div>
      <div className="grid flex-1 grid-cols-[552fr_556fr_532fr]">
        {["X-Rite i1Display Retail", "Generic Calibration DVD", "Direct Display Control"].map((d) => (
          <div key={d} className="flex flex-col items-center pt-1 text-[12px] leading-[14px] text-[#dcdcdc]">
            <span>{d}</span>
            <button aria-label={d} className="h-[19px] w-[130px] rounded-[4px] border-2 border-white bg-[#2e2e2e]" />
          </div>
        ))}
      </div>
      <div className="flex w-[152px] items-start justify-end">
        <span className="pt-2 font-['Liberation_Sans',sans-serif] text-[22px] leading-6 text-[#b4b4b4]">Sp</span>
        {["Minimize", "Restore", "Close"].map((b) => (
          <button
            key={b}
            aria-label={b}
            className="flex h-[29px] w-[30px] items-center justify-center rounded-b-[3px] border border-t-0 border-[#9a9a9a] bg-linear-to-b from-[#808080] to-[#202020]"
          >
            {b === "Minimize" && <span className="h-[5px] w-[17px] border border-[#28405c] bg-[#6ca0d8]" />}
            {b === "Restore" && (
              <svg width="22" height="22" viewBox="0 0 22 22" fill="none">
                <path d="M5 2 H20 V18" stroke="#3c6ca4" strokeWidth="3" />
                <rect x="3" y="5" width="14" height="14" stroke="#6ca4e0" strokeWidth="4" />
              </svg>
            )}
            {b === "Close" && (
              <svg width="20" height="20" viewBox="0 0 20 20">
                <path d="M3 2 L17 18 M17 2 L3 18" stroke="#ec2020" strokeWidth="3.500" />
              </svg>
            )}
          </button>
        ))}
      </div>
    </header>
  );
}

function Toolbar() {
  return (
    <div className="flex h-9 shrink-0 items-start gap-1 pt-[7px] pl-[14px] text-[13px] text-black">
      <button className="h-[23px] w-[82px] rounded-[5px] border border-[#8c8c8c] bg-[#a8a8a8] leading-5">History 1</button>
      <button className="h-[23px] w-[82px] rounded-[5px] border border-[#b0b0b0] bg-[#d4d4d4] leading-5">History 2</button>
      <GreenPlus className="ml-[2px] h-[25px] w-[42px]" label="Add history" />
    </div>
  );
}

function SideTabs() {
  return (
    <nav className="flex w-[29px] shrink-0 flex-col gap-[2px] pt-[9px] pl-1">
      {["Properties", "Settings", "Help", "About"].map((t) => (
        <button
          key={t}
          className="flex h-[83px] items-center justify-center rounded-l-[7px] border border-r-0 border-[#888] bg-[#a8a8a8] text-[13px] text-black"
        >
          <span className="rotate-180 [writing-mode:vertical-rl]">{t}</span>
        </button>
      ))}
    </nav>
  );
}

function Taskbar() {
  const item = "flex h-full shrink-0 justify-center overflow-hidden rounded-t-[2px] border border-b-0 border-[#c8d4e0] bg-linear-to-r from-[#7890a8] to-[#c0ccd8]";
  const icon = "mt-1 h-5 w-6 shrink-0 rounded-full";
  return (
    <footer className="flex h-2 shrink-0 gap-[3px] border-t border-black bg-linear-to-r from-[#4c6c90] via-[#24303e] to-[#1c2228]">
      <div className="flex w-[56px] shrink-0 justify-center overflow-hidden"><span className={`${icon} bg-[#b8d0e4]`} /></div>
      <div className={`${item} w-[60px]`}><span className={`${icon} bg-[#d0a850]`} /></div>
      <div className={`${item} w-[58px]`}><span className="mt-1 h-5 w-8 bg-[#f4c040]" /></div>
      <div className="flex w-[248px] shrink-0 items-start justify-around overflow-hidden">
        <span className={`${icon} bg-[#d8d0d0]`} />
        <span className={`${icon} bg-[#382c10]`} />
        <span className={`${icon} bg-[#d85848]`} />
        <span className={`${icon} bg-[#8098b8]`} />
      </div>
      <div className={`${item} w-[58px]`}><span className="mt-[2px] h-5 w-8 bg-[#181c24]" /></div>
      <div className={`${item} w-[58px]`}><span className={`${icon} bg-[#686868]`} /></div>
      <div className={`${item} w-[60px]`}><span className="mt-1 h-5 w-7 border-2 border-[#444] bg-white" /></div>
      <div className={`${item} w-[54px]`}><span className="mt-1 h-5 w-7 border-2 border-[#444] bg-white" /></div>
      <div className="flex-1" />
      <div className="w-[14px] bg-[#8c949c]" />
    </footer>
  );
}

export default function App() {
  return (
    <div className="flex h-screen overflow-hidden bg-[#323232] font-['DejaVu_Sans_Condensed','Noto_Sans',sans-serif]">
      <div className="w-2 shrink-0 border-x-2 border-[#181818] bg-[linear-gradient(#7c7074,#5c5054_12%,#e0d8d6_24%,#2c1c20_25%,#18141a_38%,#685450_44%,#30181a_54%,#788498_62%,#2c3038_80%,#505868)]" />
      <div className="flex min-w-0 flex-1 flex-col">
        <TopBar />
        <div className="h-[5px] shrink-0 bg-[linear-gradient(to_right,#ff0000,#ff00ff_20%,#0000ff_40%,#00ff00_60%,#ffff00_80%,#ff0000)]" />
        <div className="flex min-h-0 flex-1">
          <Sidebar />
          <main className="flex min-w-0 flex-1 flex-col">
            <Toolbar />
            <div className="flex min-h-0 flex-1 flex-col bg-[#424242] px-1 pt-1">
              <div className="flex min-h-0 flex-1 flex-col bg-[#323232] pb-[9px]">
                <div className="flex min-h-0 flex-[278] gap-[7px]">
                  <BarChart
                    title="DeltaL"
                    titleClass="h-[38px] leading-[42px]"
                    bodyClass="mr-[5px] mb-10 ml-[39px]"
                    min={0}
                    max={3.02}
                    ticks={[0, 1, 2, 3]}
                    labels="even"
                    lines={[{ value: 3.02, color: "#20a020", width: 1 }]}
                    series={[{ values: [0, 0.3873, 1.3056, 2.4989, 0.0234, 0.0761, 0.9659] }]}
                  />
                  <BarChart
                    title="DeltaC"
                    titleClass="h-[38px] leading-[42px]"
                    bodyClass="mr-[6px] mb-10 ml-8"
                    min={0}
                    max={10.07}
                    ticks={[0, 2, 4, 6, 8, 10]}
                    labels="stagger"
                    lines={[
                      { value: 10.06, color: "#f03030", width: 1 },
                      { value: 5.05, color: "#ffff00", width: 3 },
                      { value: 3.05, color: "#008000", width: 3 },
                    ]}
                    series={[{ values: [0.3194, 2.4372, 2.1669, 9.7102, 0.4348, 4.8809, 1.1237] }]}
                  />
                  <BarChart
                    title="DeltaH"
                    titleClass="h-[38px] leading-[42px]"
                    bodyClass="mr-1 mb-5 ml-5"
                    min={0}
                    max={5}
                    ticks={[0, 1, 2, 3, 4, 5]}
                    labels="single"
                    lines={[
                      { value: 5, color: "#d8d820", width: 1 },
                      { value: 3.02, color: "#008000", width: 3 },
                    ]}
                    series={[{ values: [0, 1.8268, 0.2861, 4.1437, 0.0121, 0.0606, 0.0248] }]}
                  />
                </div>
                <div className="flex min-h-0 flex-[666] pr-[6px]">
                  <div className="flex flex-[390]">
                    <BarChart
                      title="Gamut Luminance"
                      titleClass="h-[37px] leading-[42px]"
                      bodyClass="mr-1 mb-[45px] ml-[39px]"
                      min={0}
                      max={1.003}
                      ticks={[0, 0.1, 0.2, 0.3, 0.4, 0.5, 0.6, 0.7, 0.8, 0.9, 1]}
                      labels="stagger"
                      labelRows={[21, 42]}
                      series={[
                        { values: [1, 0.2091, 0.7425, 0.084, 0.7879, 0.284, 0.9518] },
                        { values: [1, 0.2153, 0.7152, 0.0722, 0.7874, 0.2855, 0.9279], fill: "#808080" },
                      ]}
                    />
                  </div>
                  <div className="ml-px flex min-w-0 flex-[864] flex-col">
                    <DataTable />
                    <PatternBar />
                    <div className="flex min-h-0 flex-1">
                      <ZoomTop />
                      <CieChart />
                      <ZoomSide />
                    </div>
                  </div>
                  <div className="ml-1 flex flex-[389]">
                    <BarChart
                      title="Gamut Luminance"
                      titleClass="h-[37px] leading-[42px]"
                      bodyClass="mr-1 mb-[45px] ml-10"
                      min={-20}
                      max={20.1}
                      ticks={[20, 15, 10, 5, 0, -5, -10, -15, -20]}
                      labels="stagger"
                      labelRows={[21, 42]}
                      series={[{ values: [-0.1, -1.65, 3.85, 16.35, 0.1, -0.35, 2.65] }]}
                    />
                  </div>
                </div>
              </div>
            </div>
          </main>
          <SideTabs />
        </div>
        <Taskbar />
      </div>
    </div>
  );
}
